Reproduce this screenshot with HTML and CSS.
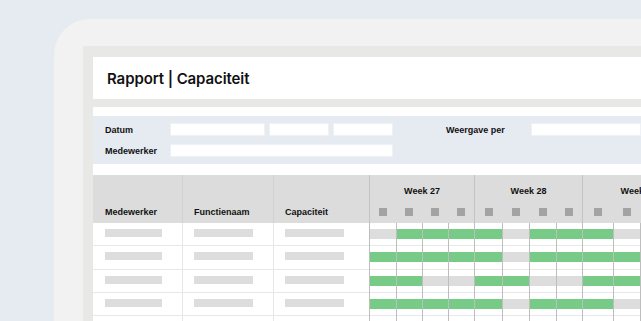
FILE: index.html
```html
<!DOCTYPE html>
<html lang="nl">
    <head>
        <meta charset="UTF-8">
        <title>Rapport | Capaciteit</title>
        <link rel="stylesheet" href="styles.css">
    </head>
    <body>
        <div class="device">
            <div class="panel">
                <header class="title-bar">
                    <h1>Rapport | Capaciteit</h1>
                </header>
                <div class="sheet">
                    <section class="filters">
                        <div class="filter-row">
                            <label class="filter-label">Datum</label>
                            <span class="field f-date"></span>
                            <span class="field f-small"></span>
                            <span class="field f-small last"></span>
                            <label class="filter-label view">Weergave per</label>
                            <span class="field f-grow"></span>
                        </div>
                        <div class="filter-row">
                            <label class="filter-label">Medewerker</label>
                            <span class="field f-wide"></span>
                        </div>
                    </section>

                    <section class="grid-table">
                        <div class="thead">
                            <div class="cell c1"><span>Medewerker</span></div>
                            <div class="cell c2"><span>Functienaam</span></div>
                            <div class="cell c3"><span>Capaciteit</span></div>
                            <div class="gantt gantt-head">
                                <div class="week w1">Week 27</div>
                                <div class="week w2">Week 28</div>
                                <div class="week w3">Week 29</div>
                                <div class="sq first"><i></i></div>
                                <div class="sq"><i></i></div>
                                <div class="sq"><i></i></div>
                                <div class="sq"><i></i></div>
                                <div class="sq first"><i></i></div>
                                <div class="sq"><i></i></div>
                                <div class="sq"><i></i></div>
                                <div class="sq"><i></i></div>
                                <div class="sq first"><i></i></div>
                                <div class="sq"><i></i></div>
                                <div class="sq"><i></i></div>
                                <div class="sq"><i></i></div>
                            </div>
                        </div>

                        <div class="row">
                            <div class="cell c1"><b class="ph"></b></div>
                            <div class="cell c2"><b class="ph"></b></div>
                            <div class="cell c3"><b class="ph"></b></div>
                            <div class="gantt">
                                <div class="day"><b class="off"></b></div>
                                <div class="day"><b class="on"></b></div>
                                <div class="day"><b class="on"></b></div>
                                <div class="day"><b class="on"></b></div>
                                <div class="day"><b class="on"></b></div>
                                <div class="day"><b class="off"></b></div>
                                <div class="day"><b class="on"></b></div>
                                <div class="day"><b class="on"></b></div>
                                <div class="day"><b class="on"></b></div>
                                <div class="day"><b class="off"></b></div>
                                <div class="day"><b class="off"></b></div>
                                <div class="day"><b class="off"></b></div>
                            </div>
                        </div>
                        <div class="row">
                            <div class="cell c1"><b class="ph"></b></div>
                            <div class="cell c2"><b class="ph"></b></div>
                            <div class="cell c3"><b class="ph"></b></div>
                            <div class="gantt">
                                <div class="day"><b class="on"></b></div>
                                <div class="day"><b class="on"></b></div>
                                <div class="day"><b class="on"></b></div>
                                <div class="day"><b class="on"></b></div>
                                <div class="day"><b class="on"></b></div>
                                <div class="day"><b class="off"></b></div>
                                <div class="day"><b class="on"></b></div>
                                <div class="day"><b class="on"></b></div>
                                <div class="day"><b class="on"></b></div>
                                <div class="day"><b class="on"></b></div>
                                <div class="day"><b class="on"></b></div>
                                <div class="day"><b class="on"></b></div>
                            </div>
                        </div>
                        <div class="row">
                            <div class="cell c1"><b class="ph"></b></div>
                            <div class="cell c2"><b class="ph"></b></div>
                            <div class="cell c3"><b class="ph"></b></div>
                            <div class="gantt">
                                <div class="day"><b class="on"></b></div>
                                <div class="day"><b class="on"></b></div>
                                <div class="day"><b class="off"></b></div>
                                <div class="day"><b class="off"></b></div>
                                <div class="day"><b class="on"></b></div>
                                <div class="day"><b class="on"></b></div>
                                <div class="day"><b class="off"></b></div>
                                <div class="day"><b class="off"></b></div>
                                <div class="day"><b class="on"></b></div>
                                <div class="day"><b class="on"></b></div>
                                <div class="day"><b class="on"></b></div>
                                <div class="day"><b class="on"></b></div>
                            </div>
                        </div>
                        <div class="row">
                            <div class="cell c1"><b class="ph"></b></div>
                            <div class="cell c2"><b class="ph"></b></div>
                            <div class="cell c3"><b class="ph"></b></div>
                            <div class="gantt">
                                <div class="day"><b class="on"></b></div>
                                <div class="day"><b class="on"></b></div>
                                <div class="day"><b class="on"></b></div>
                                <div class="day"><b class="on"></b></div>
                                <div class="day"><b class="on"></b></div>
                                <div class="day"><b class="off"></b></div>
                                <div class="day"><b class="on"></b></div>
                                <div class="day"><b class="on"></b></div>
                                <div class="day"><b class="on"></b></div>
                                <div class="day"><b class="off"></b></div>
                                <div class="day"><b class="off"></b></div>
                                <div class="day"><b class="off"></b></div>
                            </div>
                        </div>
                        <div class="row">
                            <div class="cell c1"><b class="ph"></b></div>
                            <div class="cell c2"><b class="ph"></b></div>
                            <div class="cell c3"><b class="ph"></b></div>
                            <div class="gantt">
                                <div class="day"><b class="on"></b></div>
                                <div class="day"><b class="on"></b></div>
                                <div class="day"><b class="on"></b></div>
                                <div class="day"><b class="off"></b></div>
                                <div class="day"><b class="off"></b></div>
                                <div class="day"><b class="on"></b></div>
                                <div class="day"><b class="on"></b></div>
                                <div class="day"><b class="on"></b></div>
                                <div class="day"><b class="on"></b></div>
                                <div class="day"><b class="off"></b></div>
                                <div class="day"><b class="on"></b></div>
                                <div class="day"><b class="on"></b></div>
                            </div>
                        </div>
                    </section>
                </div>
            </div>
        </div>
    </body>
</html>
```

FILE: styles.css
```css
html, body{
    margin: 0;
    padding: 0;
    width: 641px;
    height: 321px;
    overflow: hidden;
}
body{
    background-color: #E6EAF1;
    font-family: "Liberation Sans", Arial, sans-serif;
    color: #111;
}
.device{
    margin: 19px 0 0 54px;
    padding: 27px 0 0 29px;
    height: 400px;
    background-color: #F2F2F2;
    border-top-left-radius: 36px;
}
.panel{
    background-color: #E8E8E7;
    padding: 11px 0 0 10px;
    height: 400px;
}
.title-bar{
    background-color: #FFF;
    height: 42px;
    display: flex;
    align-items: center;
    padding-left: 14px;
    margin-bottom: 8px;
}
.title-bar h1{
    margin: 0;
    font-family: "Inter", sans-serif;
    font-size: 15px;
    font-weight: 600;
    letter-spacing: -0.1px;
}
.sheet{
    background-color: #FFF;
    padding-top: 9px;
    height: 400px;
}

/* filters */
.filters{
    background-color: #E6EAF1;
    padding: 7px 0 7px 12px;
    display: flex;
    flex-direction: column;
    gap: 8px;
}
.filter-row{
    display: flex;
    align-items: center;
    height: 13px;
}
.filter-label{
    width: 65px;
    font-size: 9px;
    font-weight: bold;
    flex-shrink: 0;
}
.filter-label.view{
    width: 85px;
    margin-left: 53px;
}
.field{
    display: block;
    height: 13px;
    box-sizing: border-box;
    background-color: #FFF;
    border: 1px solid #EEF1F5;
    margin-right: 4px;
}
.field.last{
    margin-right: 0;
}
.f-date{ width: 95px; }
.f-small{ width: 60px; }
.f-wide{ width: 223px; }
.f-grow{ flex: 1; margin-right: 0; }

/* table */
.grid-table{
    margin-top: 11px;
}
.thead, .row{
    display: flex;
}
.thead{
    background-color: #DCDCDC;
    height: 48px;
}
.cell{
    box-sizing: border-box;
    flex-shrink: 0;
    padding-left: 11px;
    border-right: 1px solid #E6E6E6;
}
.c1{ width: 90px; padding-left: 12px; }
.c2{ width: 91px; }
.c3{ width: 95px; border-right: none; }
.thead .cell{
    display: flex;
    align-items: flex-end;
    padding-bottom: 6px;
    font-size: 9px;
    font-weight: bold;
    border-right-color: #D2D2D2;
}
.gantt{
    display: grid;
    grid-template-columns: 27px 26px 26px 26px 28px 27px 27px 26px 31px 27px 27px 27px;
    flex-shrink: 0;
}
.gantt-head{
    grid-template-rows: 32px 16px;
}
.week{
    grid-column: span 4;
    display: flex;
    align-items: center;
    justify-content: center;
    font-size: 9px;
    font-weight: bold;
    border-left: 1px solid #C4C4C4;
}
.sq{
    display: flex;
    justify-content: center;
    padding-top: 1px;
}
.sq.first{
    border-left: 1px solid #C4C4C4;
}
.sq i{
    display: block;
    width: 8px;
    height: 8px;
    background-color: #A3A3A3;
}
.row{
    height: 23.3px;
    box-sizing: border-box;
    border-bottom: 1px solid #E8E8E8;
}
.row .cell{
    padding-top: 6px;
}
.ph{
    display: block;
    height: 8px;
    background-color: #DDDDDD;
}
.c1 .ph{ width: 57px; }
.c2 .ph{ width: 59px; }
.c3 .ph{ width: 59px; }
.day{
    border-left: 1px solid #BEBEBE;
    padding-top: 6px;
    margin-bottom: -1px;
}
.day b{
    display: block;
    height: 10px;
}
.day .on{
    background-color: #77CB86;
}
.day .off{
    background-color: #DDDDDD;
}
```
